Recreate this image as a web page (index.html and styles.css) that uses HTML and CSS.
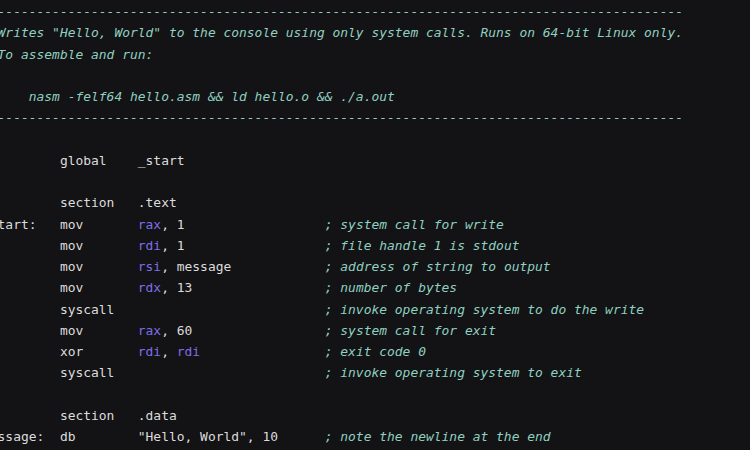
FILE: index.html
```html
<!DOCTYPE html>
<html>
<head>
<meta charset="utf-8">
<link rel="stylesheet" href="styles.css">
</head>
<body>
<pre class="code"><span class="c">; ----------------------------------------------------------------------------------------</span>
<span class="c">; Writes "Hello, World" to the console using only system calls. Runs on 64-bit Linux only.</span>
<span class="c">; To assemble and run:</span>
<span class="c">;</span>
<span class="c">;     nasm -felf64 hello.asm &amp;&amp; ld hello.o &amp;&amp; ./a.out</span>
<span class="c">; ----------------------------------------------------------------------------------------</span>

          global    _start

          section   .text
_start:   mov       <span class="r">rax</span>, 1                  <span class="c">; system call for write</span>
          mov       <span class="r">rdi</span>, 1                  <span class="c">; file handle 1 is stdout</span>
          mov       <span class="r">rsi</span>, message            <span class="c">; address of string to output</span>
          mov       <span class="r">rdx</span>, 13                 <span class="c">; number of bytes</span>
          syscall                           <span class="c">; invoke operating system to do the write</span>
          mov       <span class="r">rax</span>, 60                 <span class="c">; system call for exit</span>
          xor       <span class="r">rdi</span>, <span class="r">rdi</span>                <span class="c">; exit code 0</span>
          syscall                           <span class="c">; invoke operating system to exit</span>

          section   .data
message:  db        "Hello, World", 10      <span class="c">; note the newline at the end</span>
</pre>
</body>
</html>
```
FILE: styles.css
```css
html, body {
  margin: 0;
  padding: 0;
  background: #131215;
  overflow: hidden;
  width: 750px;
  height: 450px;
}
.code {
  margin: 0 0 0 -18px;
  padding: 1px 0 0 0;
  font-family: "DejaVu Sans Mono", "Liberation Mono", monospace;
  font-size: 12.95px;
  line-height: 21.25px;
  color: #dcdcdc;
  white-space: pre;
}
.c {
  color: #8fd0c0;
  font-style: italic;
}
.r {
  color: #7d6fe8;
}
```
